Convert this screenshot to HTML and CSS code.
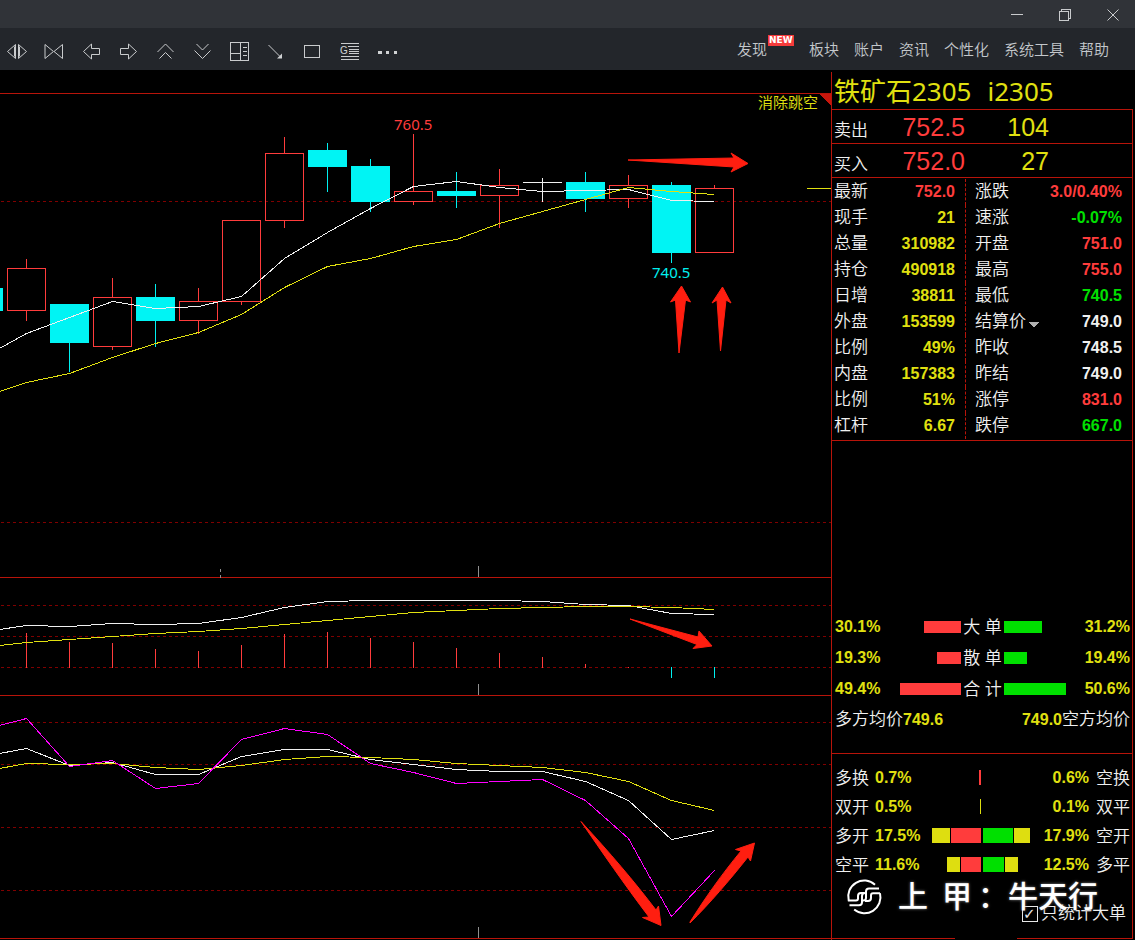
FILE: index.html
```
<!DOCTYPE html>
<html lang="zh-CN">
<head>
<meta charset="utf-8">
<title>铁矿石2305</title>
<link rel="stylesheet" href="styles.css">
</head>
<body>
<header class="titlebar">
  <button class="icon-btn" aria-label="最小化"><svg viewBox="0 0 24 24"><path d="M6 11.5h12"/></svg></button>
  <button class="icon-btn" aria-label="还原"><svg viewBox="0 0 24 24"><path d="M6.5 8.500h9v9h-9zM8.500 8.500v-2h9v9h-2"/></svg></button>
  <button class="icon-btn" aria-label="关闭"><svg class="smooth" viewBox="0 0 24 24"><path d="M6.500 6.500l11 11M17.500 6.500l-11 11"/></svg></button>
</header>
<div class="toolbar">
  <div class="tools">
    <button class="icon-btn" aria-label="放大"><svg class="smooth" viewBox="0 0 24 24"><path d="M10.500 5.500v14l-8-7zM13.500 5.500v14l8-7zM9.500 7.500v10M14.500 7.500v10"/></svg></button>
    <button class="icon-btn" aria-label="缩小"><svg class="smooth" viewBox="0 0 24 24"><path d="M3 5.500v14l8.500-7zM20.500 5.500v14l-8.500-7z"/></svg></button>
    <button class="icon-btn" aria-label="后退"><svg class="smooth" viewBox="0 0 24 24"><path d="M4.500 12.500L12.500 5v4.500h8v6h-8v4.500z"/></svg></button>
    <button class="icon-btn" aria-label="前进"><svg class="smooth" viewBox="0 0 24 24"><path d="M20.500 12.500L12.500 5v4.500h-8v6h8v4.500z"/></svg></button>
    <button class="icon-btn" aria-label="上一个"><svg class="smooth" viewBox="0 0 24 24"><path d="M4.500 13l8-8 8 8M6.500 19.500l6-6 6 6"/></svg></button>
    <button class="icon-btn" aria-label="下一个"><svg class="smooth" viewBox="0 0 24 24"><path d="M6.500 5l6 6 6-6M4.500 11.500l8 8 8-8"/></svg></button>
    <button class="icon-btn" aria-label="版面"><svg viewBox="0 0 24 24"><path d="M3.500 3.500h18v18h-18zM13.500 3.500v18M3.500 14.500h10M15.500 8.500h4M15.500 12.500h4M15.500 16.500h4"/></svg></button>
    <button class="icon-btn" aria-label="画线"><svg class="smooth" viewBox="0 0 24 24"><path d="M4.500 6l11 11"/><path class="solid" d="M18 14.500v5h-5z"/></svg></button>
    <button class="icon-btn" aria-label="矩形"><svg viewBox="0 0 24 24"><path d="M3.500 6.500h15v12h-15z"/></svg></button>
    <button class="icon-btn" aria-label="公式"><svg viewBox="0 0 24 24"><path d="M3 4.500h18M10 7.500h11M11 10.500h10M11 12.500h10M11 14.500h10M3 17.500h18M3 20.500h18"/><text x="2" y="15">G</text></svg></button>
    <button class="icon-btn" aria-label="更多"><svg viewBox="0 0 24 24"><path class="solid" d="M3 12h4v3h-4zM11 12h3v3h-3zM19 12h3v3h-3z"/></svg></button>
  </div>
  <nav class="menu">
    <a class="found" href="#">发现<span class="badge">NEW</span></a>
    <a href="#">板块</a>
    <a href="#">账户</a>
    <a href="#">资讯</a>
    <a href="#">个性化</a>
    <a href="#">系统工具</a>
    <a href="#">帮助</a>
  </nav>
</div>
<main class="workspace">
  <section class="charts">
    <button class="gap-btn">消除跳空</button>
    <svg class="chart" viewBox="0 70 831 508">
      <g class="crisp">
        <path class="grid" d="M1 201.500H831M1 522.500H831"/>
        <path class="frame" d="M0 93.500H831M0 577.500H831"/>
        <path class="corner" d="M819 94h12v12z"/>
        <path class="tick" d="M478.500 566V577M220.500 569v3M220.500 575v3"/>
        <g class="up">
          <path d="M26.500 259v9M26.500 311v10M7.500 268.500h38v42h-38z"/>
          <path d="M112.500 278v19M112.500 347v3M93.500 297.500h38v49h-38z"/>
          <path d="M198.500 288v13M198.500 321v13M179.500 301.500h38v19h-38z"/>
          <path d="M241.500 302v3M222.500 220.500h38v81h-38z"/>
          <path d="M284.500 137v16M284.500 221v7M265.500 153.500h38v67h-38z"/>
          <path d="M413.500 134v57M413.500 202v3M394.500 191.500h38v10h-38z"/>
          <path d="M499.500 169v16M499.500 196v32M480.500 185.500h38v10h-38z"/>
          <path d="M628.500 175v10M628.500 199v9M609.500 185.500h38v13h-38z"/>
          <path d="M714.500 185v3M695.500 188.500h38v64h-38z"/>
        </g>
        <g class="down">
          <path d="M69.500 343v29M155.500 284v63M327.500 143v49M370.500 159v53M456.500 172v36M585.500 172v40M671.500 182v81"/>
          <rect x="0" y="288" width="3" height="23"/>
          <rect x="50" y="304" width="39" height="39"/>
          <rect x="136" y="297" width="39" height="24"/>
          <rect x="308" y="150" width="39" height="17"/>
          <rect x="351" y="166" width="39" height="36"/>
          <rect x="437" y="191" width="39" height="5"/>
          <rect x="566" y="182" width="39" height="17"/>
          <rect x="652" y="185" width="39" height="68"/>
        </g>
        <path class="white" d="M523 182.500h39M542.500 178v24"/>
        <g transform="translate(0.5 0.5)">
          <polyline class="white" points="-1,348 26,333 69,317 112,301 155,308 198,306 241,296 284,258 327,232 370,208 413,186 456,181 499,187 542,191 585,190 628,189 671,200 714,201"/>
          <polyline class="yellow" points="-1,391 26,382 69,373 112,357 155,343 198,332 241,314 284,287 327,266 370,258 413,246 456,239 499,223 542,211 585,199 628,187 671,191 714,194"/>
        </g>
        <path class="yellow" d="M807 188.500h24"/>
      </g>
      <text class="high" x="394" y="130">760.5</text>
      <text class="low" x="652" y="278">740.5</text>
      <g class="arrow">
        <path d="M628 160l106-2-3-5 17 10.500-17 8.500 3-5z"/>
        <path d="M679 353l-3.500-53-5 2 11-16 9 16-5-2z"/>
        <path d="M720.500 351l-3.500-51-5 3 10.500-16 8.500 16-5-3z"/>
      </g>
    </svg>
    <svg class="chart" viewBox="0 578 831 118">
      <g class="crisp">
        <path class="grid" d="M1 605.500H831M1 636.500H831M1 667.500H831"/>
        <path class="frame" d="M0 695.500H831"/>
        <path class="tick" d="M478.500 684v11"/>
        <path class="up" d="M26.500 633V668M69.500 642V668M112.500 643V668M155.500 649V668M198.500 651V668M241.500 645V668M284.500 634V668M327.500 632V668M370.500 638V668M413.500 642V668M456.500 648V668M499.500 653V668M542.500 657V668M585.500 664V668M628.500 667V668"/>
        <path class="down" d="M671.500 667v11M714.500 667v11"/>
        <g transform="translate(0.5 0.5)">
          <polyline class="white" points="-1,629 26,625 69,626 112,623 155,624 198,623 241,617 284,607 327,601 370,600 499,600 542,601 585,604 628,605 671,613 714,614"/>
          <polyline class="yellow" points="-1,645 26,642 69,639 112,636 155,633 198,631 241,628 284,624 327,620 370,616 413,612 456,610 499,608 542,607 585,606 628,606 671,607 714,609"/>
        </g>
      </g>
      <path class="arrow" d="M630 619l68 18 1-6 13 15-19 2.500 4-4z"/>
    </svg>
    <svg class="chart" viewBox="0 696 831 244">
      <g class="crisp">
        <path class="grid" d="M1 722.500H831M1 764.500H831M1 827.500H831M1 890.500H831"/>
        <path class="frame" d="M0 938.500H831"/>
        <path class="tick" d="M478.500 927v11"/>
        <g transform="translate(0.5 0.5)">
          <polyline class="white" points="-1,753 26,748 69,765 112,762 155,774 198,774 241,756 284,749 327,749 370,759 413,764 456,769 499,771 542,771 585,781 628,800 671,839 714,830"/>
          <polyline class="yellow" points="-1,768 26,763 69,764 112,763 155,767 198,769 241,765 284,759 327,756 370,757 413,759 456,763 499,765 542,767 585,772 628,781 671,800 714,810"/>
          <polyline class="magenta" points="-1,725 26,718 69,766 112,760 155,788 198,783 241,739 284,728 327,734 370,763 413,772 456,783 499,781 542,779 585,800 628,838 671,916 714,870"/>
        </g>
      </g>
      <g class="arrow">
        <path d="M581 821.500C610 853 634 881 656 910l2.500-4 2.500 19.500-18.500-8 6.500-.5C624 884 602 852 581 821.500z"/>
        <path d="M690 922C705 898 722 874 741 851l-5.500-1.500 19-6.500-4 18-2.500-4C729 881 710 903 690 923z"/>
      </g>
    </svg>
  </section>
  <aside class="panel">
    <h1 class="contract"><span>铁矿石2305</span><span>i2305</span></h1>
    <div class="frame-box">
      <div class="quote"><span>卖出</span><span class="price">752.5</span><span class="lots">104</span></div>
      <div class="quote"><span>买入</span><span class="price">752.0</span><span class="lots">27</span></div>
      <table class="stats">
        <tr><th>最新</th><td class="r">752.0</td><th>涨跌</th><td class="r">3.0/0.40%</td></tr>
        <tr><th>现手</th><td class="y">21</td><th>速涨</th><td class="g">-0.07%</td></tr>
        <tr><th>总量</th><td class="y">310982</td><th>开盘</th><td class="r">751.0</td></tr>
        <tr><th>持仓</th><td class="y">490918</td><th>最高</th><td class="r">755.0</td></tr>
        <tr><th>日增</th><td class="y">38811</td><th>最低</th><td class="g">740.5</td></tr>
        <tr><th>外盘</th><td class="y">153599</td><th><select class="settle" aria-label="价格类型"><option>结算价</option></select></th><td>749.0</td></tr>
        <tr><th>比例</th><td class="y">49%</td><th>昨收</th><td>748.5</td></tr>
        <tr><th>内盘</th><td class="y">157383</td><th>昨结</th><td>749.0</td></tr>
        <tr><th>比例</th><td class="y">51%</td><th>涨停</th><td class="r">831.0</td></tr>
        <tr><th>杠杆</th><td class="y">6.67</th><th>跌停</th><td class="g">667.0</td></tr>
      </table>
      <section class="orders">
        <div class="order"><b>30.1%</b><i class="bar red" style="width:37px"></i><span>大 单</span><i class="bar green" style="width:38px"></i><b>31.2%</b></div>
        <div class="order"><b>19.3%</b><i class="bar red" style="width:24px"></i><span>散 单</span><i class="bar green" style="width:23px"></i><b>19.4%</b></div>
        <div class="order"><b>49.4%</b><i class="bar red" style="width:61px"></i><span>合 计</span><i class="bar green" style="width:62px"></i><b>50.6%</b></div>
        <div class="average"><span>多方均价<b>749.6</b></span><span><b>749.0</b>空方均价</span></div>
      </section>
      <section class="flows">
        <div class="flow"><span>多换</span><b>0.7%</b><div class="half left"><i class="red" style="width:2px"></i></div><div class="half"></div><b>0.6%</b><span>空换</span></div>
        <div class="flow"><span>双开</span><b>0.5%</b><div class="half left"><i class="yel" style="width:1px"></i></div><div class="half"></div><b>0.1%</b><span>双平</span></div>
        <div class="flow"><span>多开</span><b>17.5%</b><div class="half left"><i class="yel" style="width:18px"></i><i class="red" style="width:30px"></i></div><div class="half"><i class="green" style="width:30px"></i><i class="yel" style="width:16px"></i></div><b>17.9%</b><span>空开</span></div>
        <div class="flow"><span>空平</span><b>11.6%</b><div class="half left"><i class="yel" style="width:13px"></i><i class="red" style="width:20px"></i></div><div class="half"><i class="green" style="width:21px"></i><i class="yel" style="width:13px"></i></div><b>12.5%</b><span>多平</span></div>
      </section>
      <div class="option">
        <label><input type="checkbox" checked>只统计大单</label>
        <div class="watermark">
          <svg viewBox="0 0 36 36"><path d="M29 5.700A16 16 0 0 0 2.700 21.500H10q2 0 2-2V17q0-3 3-3h3M3.500 26.300H13q3 0 3-3V17q0-3 3-3M33 9.500H23q-3 0-3 3V19q0 2.500-3 2.500M34 14.300H27q-2 0-2 2V19q0 3-3 3h-3M34 14.300A16 16 0 0 1 8.200 30.500"/></svg>
          <span>上</span><span>甲</span><span class="colon">：</span><span>牛天行</span>
        </div>
      </div>
    </div>
  </aside>
</main>
</body>
</html>
```
FILE: styles.css
```
* { box-sizing: border-box; }
body {
  margin: 0;
  background: #000;
  color: #f0f0f0;
  font-family: "Liberation Sans", "Noto Sans CJK SC", sans-serif;
  font-weight: 350;
}
button { padding: 0; border: 0; background: none; color: inherit; font: inherit; }
.titlebar {
  display: flex;
  justify-content: flex-end;
  align-items: center;
  gap: 24px;
  height: 28px;
  padding: 2px 10px 0 0;
  background: #303338;
}
.icon-btn { width: 24px; height: 24px; }
.icon-btn svg {
  display: block;
  width: 24px;
  height: 24px;
  fill: none;
  stroke: #c9cbcd;
  shape-rendering: crispEdges;
}
.icon-btn .smooth { shape-rendering: auto; }
.icon-btn .solid { fill: #d0d2d4; stroke: none; }
.icon-btn text { fill: #d0d2d4; stroke: none; font-size: 10px; }
.toolbar {
  display: flex;
  justify-content: space-between;
  align-items: center;
  height: 42px;
  padding: 4px 26px 0 5px;
  background: #23262b;
}
.tools { display: flex; gap: 13px; }
.menu {
  display: flex;
  gap: 15px;
  padding-bottom: 3px;
  font-size: 15px;
  line-height: 22px;
}
.menu a { color: #c4c8cc; text-decoration: none; white-space: nowrap; }
.found { position: relative; margin-right: 27px; }
.badge {
  position: absolute;
  left: 31px;
  top: -4px;
  width: 26px;
  height: 11px;
  background: #f53b3b;
  color: #fff;
  font: bold 9px/11px "DejaVu Sans", sans-serif;
  text-align: center;
}
.workspace {
  display: grid;
  grid-template-columns: minmax(0, 1fr) 304px;
  min-height: calc(100vh - 70px);
}
.charts { position: relative; }
.chart { display: block; width: 100%; height: auto; }
.gap-btn {
  position: absolute;
  right: 13px;
  top: 23px;
  color: #e0e010;
  font-size: 15px;
  line-height: 20px;
}
.crisp { shape-rendering: crispEdges; fill: none; }
.grid { stroke: #800000; stroke-dasharray: 3 3; }
.frame { stroke: #b8140a; }
.corner { fill: #c8160c; }
.tick { stroke: #909090; }
.up { stroke: #ff3c3c; }
.down { stroke: #00f0f0; }
.down rect { fill: #00f4f4; stroke: none; }
.white { stroke: #f0f0f0; }
.yellow { stroke: #e0e010; }
.magenta { stroke: #ff00ff; }
.arrow { fill: #ff1e10; stroke: #ff1e10; stroke-linejoin: round; }
.chart text { font: 15px "Noto Sans", sans-serif; }
.high { fill: #ff3c3c; }
.low { fill: #00f0f0; }
.panel {
  display: flex;
  flex-direction: column;
  margin-top: 2px;
  padding-right: 2px;
  border-left: 1px solid #b8140a;
  font-size: 17px;
}
.contract {
  display: flex;
  gap: 16px;
  height: 37px;
  margin: 0;
  padding-left: 2px;
  color: #e0e010;
  font: 26px/38px "Noto Sans", "Noto Sans CJK SC", sans-serif;
}
.frame-box {
  position: relative;
  display: flex;
  flex: 1;
  flex-direction: column;
  margin-bottom: 1px;
  border: 1px solid #b8140a;
  border-left: 0;
}
.frame-box::after {
  content: "";
  position: absolute;
  right: 115px;
  bottom: -1px;
  width: 62px;
  height: 1px;
  background: #000;
}
.quote {
  display: grid;
  grid-template-columns: 44px 87px 84px;
  align-items: baseline;
  height: 34px;
  padding-left: 2px;
  border-bottom: 1px solid #b8140a;
  line-height: 34px;
}
.quote .price, .quote .lots { font-size: 25px; text-align: right; }
.price { color: #ff3c3c; }
.lots { color: #e0e010; }
.stats {
  width: 100%;
  padding: 1px 0;
  border-bottom: 1px solid #b8140a;
  border-spacing: 0;
  table-layout: fixed;
}
.stats th, .stats td { height: 26px; padding: 0; line-height: 26px; white-space: nowrap; }
.stats th { width: 43px; padding-left: 2px; font-weight: 350; text-align: left; }
.stats td { padding-right: 10px; font-size: 16px; font-weight: 700; text-align: right; }
.stats th:nth-child(3) { width: 77px; padding-left: 9px; border-left: 1px dashed #b8140a; }
.r { color: #ff3c3c; }
.y, .frame-box b { color: #e0e010; }
.g { color: #00e000; }
.frame-box b { font-size: 16px; font-weight: 700; }
.settle {
  display: block;
  width: 66px;
  padding: 0;
  border: 0;
  appearance: none;
  background: linear-gradient(to bottom left, #b0b0b0 50%, transparent 50%) 53px 13px / 6px 6px no-repeat, linear-gradient(to bottom right, #b0b0b0 50%, transparent 50%) 59px 13px / 6px 6px no-repeat;
  color: inherit;
  font: inherit;
  line-height: 26px;
}
.orders {
  margin-top: auto;
  padding: 0 2px 18px 3px;
  border-bottom: 1px solid #b8140a;
}
.order {
  display: grid;
  grid-template-columns: 50px 1fr 43px 1fr 50px;
  align-items: center;
  height: 31px;
}
.order span { padding-bottom: 2px; text-align: center; }
.order b:last-child { text-align: right; }
.bar { height: 12px; }
.order .red { justify-self: end; }
.red { background: #ff3c3c; }
.green { background: #00e000; }
.yel { background: #dede10; }
.average { display: flex; justify-content: space-between; line-height: 31px; }
.flows { padding: 9px 2px 0 3px; }
.flow {
  display: grid;
  grid-template-columns: 40px 50px 56px 1fr 50px 41px;
  align-items: center;
  height: 29px;
}
.flow > span { padding-bottom: 2px; }
.flow b:nth-of-type(2), .flow > span:last-child { text-align: right; }
.half { display: flex; gap: 1px; padding-left: 2px; }
.half.left { justify-content: flex-end; padding-left: 0; }
.half i { height: 15px; }
.option { position: relative; height: 59px; padding: 22px 6px 0 0; }
.option label {
  display: flex;
  justify-content: flex-end;
  align-items: center;
  gap: 3px;
  line-height: 26px;
}
.option input {
  width: 16px;
  height: 16px;
  margin: 0;
  border: 1px solid #e8e8e8;
  appearance: none;
  background: #000;
  color: #e8e8e8;
}
.option input:checked::before {
  content: "✓";
  display: block;
  font: bold 15px/14px "DejaVu Sans", sans-serif;
}
.watermark {
  position: absolute;
  left: 14px;
  top: 0;
  display: flex;
  align-items: center;
  color: #fff;
  font-size: 30px;
  font-weight: 500;
  line-height: 36px;
  text-shadow: 0 0 3px #888;
  pointer-events: none;
}
.watermark svg {
  width: 36px;
  height: 36px;
  margin-right: 16px;
  overflow: visible;
  fill: none;
  stroke: #fff;
  stroke-width: 2;
}
.watermark span + span { margin-left: 14px; }
.watermark .colon { width: 18px; margin-left: 6px; }
.watermark .colon + span { margin-left: 12px; }
```
